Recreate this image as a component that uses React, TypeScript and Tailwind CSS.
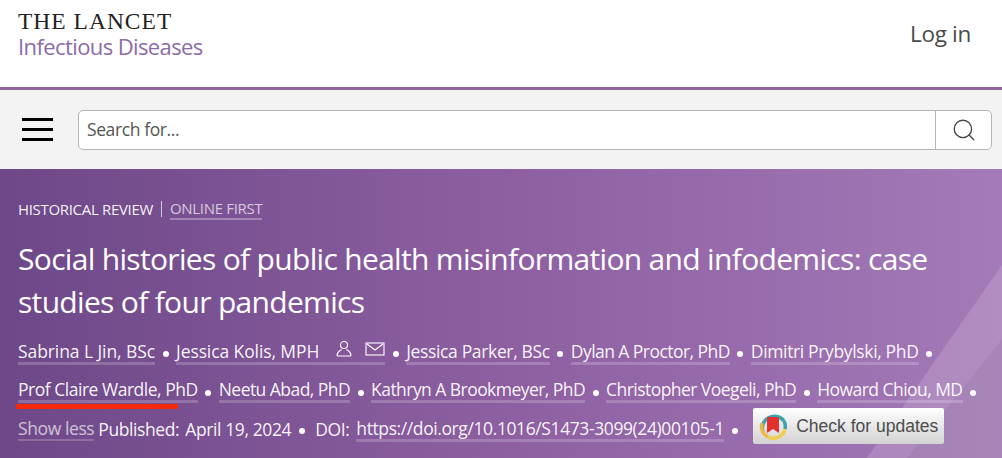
import { Search } from "lucide-react";

function Author({ name, tracking = "" }: { name: string; tracking?: string }) {
  return <a className={`whitespace-nowrap border-b-[3px] border-white/20 leading-[22px] ${tracking}`}>{name}</a>;
}

function Dot() {
  return <span className="mx-[7.5px] inline-block h-[6px] w-[6px] shrink-0 translate-y-[2px] rounded-full bg-white" />;
}

function CrossmarkLogo() {
  return (
    <svg width="28" height="28" viewBox="0 0 28 28">
      <path d="M4 20 A12 12 0 0 1 25 9" fill="none" stroke="#3aa3ad" strokeWidth="3.5" />
      <path d="M3 11 A12 12 0 0 0 9 25" fill="none" stroke="#efb73e" strokeWidth="3.5" />
      <path d="M9 25 A12 12 0 0 0 26 17" fill="none" stroke="#efcf4e" strokeWidth="3.5" />
      <path d="M25 9 A12 12 0 0 1 26 17" fill="none" stroke="#3aa3ad" strokeWidth="3.5" />
      <path d="M8 5 H20 V21 L14 17 L8 21 Z" fill="#e2322f" />
    </svg>
  );
}

export default function App() {
  return (
    <div className="h-[458px] w-[1002px] overflow-hidden bg-white font-['Open_Sans',sans-serif]">
      {/* Top header */}
      <header className="flex h-[90px] items-start justify-between border-b-[3px] border-[#8f659c] pl-[18px] pr-[31px]">
        <div className="pt-[9px]">
          <div className="font-['Liberation_Serif',serif] text-[23.5px] leading-[24px] tracking-[1px] text-[#222]">THE LANCET</div>
          <div className="mt-[1px] text-[22px] leading-[24px] tracking-[-0.6px] text-[#8a6ca8]">Infectious Diseases</div>
        </div>
        <a className="pt-[20px] text-[22.5px] leading-[28px] tracking-[-0.3px] text-[#4a4a4a]">Log in</a>
      </header>

      {/* Search bar */}
      <div className="flex h-[79px] items-center bg-[#f3f3f4] pl-[22px] pr-[10px]">
        <div className="flex w-[31px] flex-col gap-[7px]">
          <span className="h-[3px] bg-black" />
          <span className="h-[3px] bg-black" />
          <span className="h-[3px] bg-black" />
        </div>
        <div className="ml-[25px] flex h-[40px] flex-1 items-center rounded-[5px] border border-[#b5b5b5] bg-white">
          <span className="flex-1 pl-[8px] text-[17.5px] tracking-[-0.4px] text-[#555]">Search for...</span>
          <span className="flex h-full w-[56px] items-center justify-center border-l border-[#b5b5b5]">
            <Search size={26} strokeWidth={1.2} className="text-[#444]" />
          </span>
        </div>
      </div>

      {/* Article hero */}
      <section className="relative h-[289px] overflow-hidden bg-gradient-to-r from-[#6d4888] via-[#8d5fa1] to-[#a47ab8] pl-[18px] pr-[20px] pt-[30px] text-white">
        <div className="absolute bottom-0 right-0 h-[195px] w-[150px] bg-white/15 [clip-path:polygon(150px_2px,15px_195px,150px_195px)]" />
        <div className="absolute bottom-0 right-0 h-[195px] w-[150px] bg-black/5 [clip-path:polygon(150px_76px,55px_195px,150px_195px)]" />

        <div className="relative">
          <div className="flex h-[20px] items-center whitespace-nowrap text-[15px] tracking-[-0.32px]">
            <span className="font-medium text-white/95">HISTORICAL REVIEW</span>
            <span className="mx-[8px] h-[16px] w-px bg-white/70" />
            <a className="border-b-[2px] border-white/30 leading-[19px] text-white/70">ONLINE FIRST</a>
          </div>

          <h1 className="mt-[18px] text-[30px] leading-[43px] tracking-[-0.68px]">
            Social histories of public health misinformation and infodemics: case studies of four pandemics
          </h1>

          <div className="mt-[10px] text-[17.5px] text-white/95">
            <div className="flex h-[38.5px] items-center tracking-[-0.35px]">
              <Author name="Sabrina L Jin, BSc" tracking="tracking-[-0.08px]" />
              <Dot />
              <a className="flex h-[25px] items-center whitespace-nowrap border-b-[3px] border-white/20 tracking-[-0.1px]">
                Jessica Kolis, MPH
                <svg width="18" height="18" viewBox="0 0 18 18" fill="none" stroke="white" strokeWidth="1.1" className="ml-[16px] -translate-y-[2px]">
                  <circle cx="9" cy="5" r="3.5" />
                  <path d="M2 16 C2 11.5 5 10.5 6.5 9.5 M16 16 C16 11.5 13 10.5 11.5 9.5 M2 16 H16" />
                </svg>
                <svg width="20" height="14" viewBox="0 0 20 14" fill="none" stroke="white" strokeWidth="1.1" className="ml-[12px] -translate-y-[2px]">
                  <rect x="1" y="1" width="18" height="12" />
                  <path d="M2 2 L10 8 L18 2" />
                </svg>
              </a>
              <Dot />
              <Author name="Jessica Parker, BSc" />
              <Dot />
              <Author name="Dylan A Proctor, PhD" tracking="tracking-[-0.55px]" />
              <Dot />
              <Author name="Dimitri Prybylski, PhD" />
              <Dot />
            </div>

            <div className="relative flex h-[38.5px] items-center tracking-[-0.55px]">
              <Author name="Prof Claire Wardle, PhD" tracking="tracking-[-0.48px]" />
              <Dot />
              <Author name="Neetu Abad, PhD" />
              <Dot />
              <Author name="Kathryn A Brookmeyer, PhD" />
              <Dot />
              <Author name="Christopher Voegeli, PhD" />
              <Dot />
              <Author name="Howard Chiou, MD" />
              <Dot />
              <span className="absolute left-[-2px] top-[32px] h-[5px] w-[162px] bg-[#f52a0a]" />
            </div>

            <div className="flex h-[38.5px] items-center whitespace-nowrap tracking-[-0.4px]">
              <a className="border-b-[2px] border-white/20 leading-[22px] text-white/65">Show less</a>
              <span className="ml-[4px]">Published:</span>
              <span className="ml-[6px]">April 19, 2024</span>
              <Dot />
              <span className="ml-[3px]">DOI:</span>
              <a className="ml-[7px] border-b-[3px] border-white/20 leading-[22px]">https://doi.org/10.1016/S1473-3099(24)00105-1</a>
              <Dot />
              <div className="ml-[8px] flex h-[36px] w-[191px] -translate-y-[3px] items-center gap-[9px] rounded-[2px] bg-gradient-to-b from-white to-[#d2d2d2] pl-[6px] font-['Liberation_Sans',sans-serif] text-[17.5px] leading-none tracking-normal text-[#4d4d4d]">
                <CrossmarkLogo />
                Check for updates
              </div>
            </div>
          </div>
        </div>
      </section>
    </div>
  );
}
